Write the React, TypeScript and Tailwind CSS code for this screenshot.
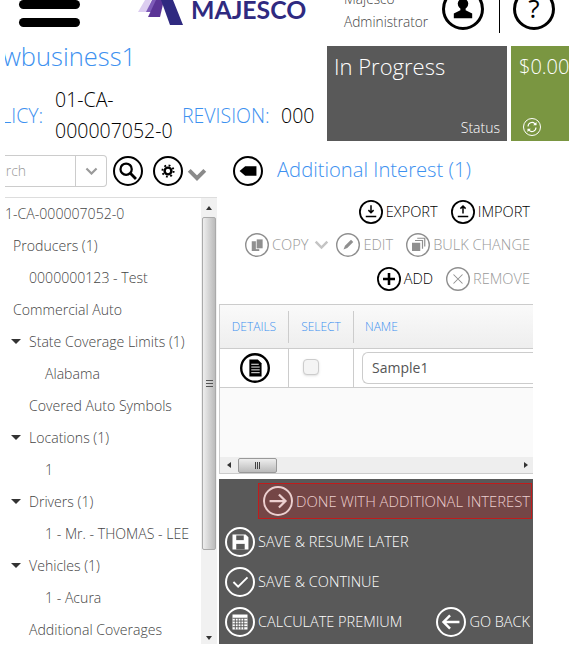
import React from "react";

type RingProps = { size?: number; sw?: number; color?: string; className?: string; children?: React.ReactNode };

// every round toolbar icon is a ring with a small glyph in a 32 box
const Ring = ({ size = 28, sw = 2, color = "currentColor", className = "", children }: RingProps) => {
  const stroke = sw * (32 / size);
  return (
    <svg width={size} height={size} viewBox="0 0 32 32" className={`shrink-0 ${className}`} style={{ color }}>
      <circle cx="16" cy="16" r={16 - stroke / 2} fill="none" stroke="currentColor" strokeWidth={stroke} />
      {children}
    </svg>
  );
};

const Chevron = ({ w = 18, color = "#8a8a8a", sw = 3 }: { w?: number; color?: string; sw?: number }) => (
  <svg width={w} height={w * 0.62} viewBox="0 0 18 11" className="shrink-0">
    <path d="M2 2l7 7 7-7" fill="none" stroke={color} strokeWidth={sw} />
  </svg>
);

const tree = [
  { label: "1-CA-000007052-0", indent: 0 },
  { label: "Producers (1)", indent: 8 },
  { label: "0000000123 - Test", indent: 24 },
  { label: "Commercial Auto", indent: 8 },
  { label: "State Coverage Limits (1)", indent: 24, open: true },
  { label: "Alabama", indent: 40 },
  { label: "Covered Auto Symbols", indent: 24 },
  { label: "Locations (1)", indent: 24, open: true },
  { label: "1", indent: 40 },
  { label: "Drivers (1)", indent: 24, open: true },
  { label: "1 - Mr. - THOMAS - LEE", indent: 40 },
  { label: "Vehicles (1)", indent: 24, open: true },
  { label: "1 - Acura", indent: 40 },
  { label: "Additional Coverages", indent: 24 },
];

const Header = () => (
  <div className="flex h-[46px] items-start overflow-hidden">
    <div className="ml-[19px] flex w-[61px] shrink-0 flex-col gap-[9px]">
      <div className="h-[9px] rounded-full bg-black" />
      <div className="h-[9px] rounded-full bg-black" />
    </div>
    <svg width="46" height="25" viewBox="0 0 46 25" className="ml-[58px] shrink-0">
      <polygon points="0,12 7,0 13,0 9,12" fill="#dccdf0" />
      <polygon points="8,12 14,0 22,0 15,12" fill="#7e5bb8" />
      <polygon points="10,17 18,0 26,0 22,17" fill="#5b3496" />
      <polygon points="23,0 35,0 45,25 32,25" fill="#2f2a80" />
    </svg>
    <div className="-mt-[6px] ml-[7px] w-[153px] shrink-0 font-['Lato',sans-serif] text-[24.8px] leading-[32px] font-bold text-[#2f2a80]">
      MAJESCO
    </div>
    <div className="-mt-[13px] w-[98px] shrink-0 text-[13.7px] leading-[23px] font-light text-[#444]">
      <div>Majesco</div>
      <div>Administrator</div>
    </div>
    <Ring size={42} sw={3} color="#000" className="-mt-[12px]">
      <circle cx="16" cy="12" r="4" />
      <path d="M14 15h4v2l5 2.5V23H9v-3.5l5-2.5z" />
    </Ring>
    <div className="ml-[15px] h-[33px] w-px shrink-0 bg-black" />
    <Ring size={42} sw={3} color="#000" className="-mt-[12px] ml-[13px]">
      <text x="16" y="23" textAnchor="middle" fontSize="20" fontFamily="'Open Sans',sans-serif" fill="#000">?</text>
    </Ring>
  </div>
);

const Summary = () => (
  <div className="flex h-[95px] items-start">
    <div className="ml-[5px] w-[322px] shrink-0 overflow-hidden font-light text-[#3d91f0]">
      <div className="-ml-[35px] mt-[-7px] text-[25.5px] leading-[34px] whitespace-nowrap">Newbusiness1</div>
      <div className="-ml-[30px] mt-[11px] flex items-center text-[19.5px] leading-[31px]">
        <span className="w-[80px] shrink-0">POLICY:</span>
        <span className="w-[127px] shrink-0 text-black">01-CA-<br />000007052-0</span>
        <span className="w-[99px] shrink-0">REVISION:</span>
        <span className="text-black">000</span>
      </div>
    </div>
    <div className="flex h-[95px] w-[180px] shrink-0 flex-col justify-between bg-[#595959] px-[7px] pb-[3px] text-white font-light">
      <div className="-mt-[1px] text-[22px] leading-[42px]">In Progress</div>
      <div className="text-right text-[14px] leading-5">Status</div>
    </div>
    <div className="ml-[4px] flex h-[95px] w-[58px] shrink-0 flex-col justify-between overflow-hidden bg-[#7a9641] pb-[4px] pl-[8px] text-white font-light">
      <div className="text-[20px] leading-[42px]">$0.00</div>
      <Ring size={18} sw={1} color="#fff" className="mb-[1px] ml-[4px]">
        <path d="M9 15a7 7 0 0 1 12-5l2 2M23 17a7 7 0 0 1-12 5l-2-2" fill="none" stroke="#fff" strokeWidth="2" />
        <path d="M24 7v6h-6M8 25v-6h6" fill="#fff" />
      </Ring>
    </div>
  </div>
);

const SearchRow = () => (
  <div className="mt-[14px] flex h-[32px] items-center">
    <div className="ml-[5px] flex h-[32px] w-[102px] shrink-0 items-center overflow-hidden rounded-r-[4px] border border-l-0 border-[#ccc]">
      <span className="-ml-[22px] mb-[2px] w-[92px] shrink-0 text-[14px] font-light text-[#999]">Search</span>
      <div className="h-[32px] w-px shrink-0 bg-[#ccc]" />
      <div className="ml-[9px]">
        <Chevron w={13} color="#9a9a9a" />
      </div>
    </div>
    <Ring size={30} color="#000" className="ml-[6px]">
      <circle cx="14" cy="14" r="6" fill="none" stroke="#000" strokeWidth="2.4" />
      <path d="M18.5 18.5l6 6" stroke="#000" strokeWidth="3" />
    </Ring>
    <Ring size={30} color="#000" className="ml-[10px]">
      <circle cx="16" cy="16" r="3.6" fill="none" stroke="#000" strokeWidth="2.6" />
      <circle cx="16" cy="16" r="6" fill="none" stroke="#000" strokeWidth="2" strokeDasharray="2 2.7" />
    </Ring>
    <div className="ml-[4px] mt-[7px]">
      <Chevron w={20} sw={3.6} />
    </div>
    <Ring size={30} color="#000" className="ml-[26px]">
      <path d="M7 16l6-5h12v10H13z" />
    </Ring>
    <div className="ml-[14px] mb-[3px] text-[20.2px] font-light text-[#3d91f0]">Additional Interest (1)</div>
  </div>
);

const Tree = () => (
  <div className="ml-[5px] flex h-[447px] w-[212px] shrink-0 border-t border-r border-[#ddd]">
    <div className="w-[196px] shrink-0 overflow-hidden">
      {tree.map((node) => (
        <div key={node.label} className="relative flex h-[32px] items-center text-[14.1px] whitespace-nowrap font-light text-[#444]" style={{ paddingLeft: node.indent }}>
          {node.open && <span className="absolute left-[6px] top-[13px] h-0 w-0 border-x-[5px] border-t-[5px] border-x-transparent border-t-[#333]" />}
          {node.label}
        </div>
      ))}
    </div>
    <div className="flex w-[16px] shrink-0 flex-col items-center bg-[#f1f1f1]">
      <div className="flex h-[19px] items-center">
        <span className="h-0 w-0 border-x-[3.5px] border-b-[4px] border-x-transparent border-b-[#333]" />
      </div>
      <div className="flex h-[333px] w-[14px] items-center justify-center rounded-[2px] border border-[#aaa] bg-gradient-to-r from-[#eee] to-[#bbb]">
        <div className="h-[7px] w-[7px] border-y border-[#555] bg-[linear-gradient(#555,#555)] bg-[length:100%_1px] bg-center bg-no-repeat" />
      </div>
      <div className="flex-1" />
      <div className="flex h-[9px] items-center pb-[3px]">
        <span className="h-0 w-0 border-x-[3.5px] border-t-[4px] border-x-transparent border-t-[#333]" />
      </div>
    </div>
  </div>
);

const ToolButton = ({ label, off, children }: { label: string; off?: boolean; children: React.ReactNode }) => (
  <div className={`flex items-center gap-[3px] text-[14.6px] ${off ? "text-[#999]" : "text-black"}`}>
    <Ring size={24} sw={off ? 1.4 : 1.8} color={off ? "#8f8f8f" : "#000"}>
      {children}
    </Ring>
    <span className="font-light">{label}</span>
  </div>
);

const Toolbar = () => (
  <div className="flex h-[106px] flex-col items-end pr-[3px]">
    <div className="flex h-[28px] items-center gap-[13px]">
      <ToolButton label="EXPORT">
        <path d="M16 7v10M12.5 13.5L16 17l3.5-3.5M9 22h14" fill="none" stroke="#000" strokeWidth="2" />
      </ToolButton>
      <ToolButton label="IMPORT">
        <path d="M16 18V8M12.5 11.5L16 8l3.5 3.5M9 22h14" fill="none" stroke="#000" strokeWidth="2" />
      </ToolButton>
    </div>
    <div className="mt-[2px] flex h-[34px] items-center">
      <ToolButton label="COPY" off>
        <rect x="9" y="11" width="10" height="13" fill="#8f8f8f" />
        <rect x="15" y="8" width="9" height="13" fill="#8f8f8f" stroke="#fff" />
      </ToolButton>
      <div className="ml-[6px] mr-[7px]">
        <Chevron w={15} color="#c4c4c4" sw={3} />
      </div>
      <ToolButton label="EDIT" off>
        <path d="M10 22l2-5 8-8 3 3-8 8z" fill="#8f8f8f" />
      </ToolButton>
      <div className="ml-[13px]">
        <ToolButton label="BULK CHANGE" off>
          <rect x="8" y="13" width="11" height="11" fill="#8f8f8f" />
          <path d="M12 10h10v11M15 7h10v11" fill="none" stroke="#8f8f8f" strokeWidth="1.6" />
        </ToolButton>
      </div>
    </div>
    <div className="flex h-[34px] items-center gap-[13px]">
      <ToolButton label="ADD">
        <path d="M16 8v16M8 16h16" stroke="#000" strokeWidth="3.4" />
      </ToolButton>
      <ToolButton label="REMOVE" off>
        <path d="M10 10l12 12M22 10L10 22" stroke="#8f8f8f" strokeWidth="1.4" />
      </ToolButton>
    </div>
  </div>
);

const GridTable = () => (
  <div className="flex h-[170px] flex-col border border-[#ccc] border-r-0 bg-[#fafafa]">
    <div className="flex h-[44px] shrink-0 items-center border-b border-[#ccc] bg-gradient-to-b from-[#fafafa] to-[#eee] text-[12px] font-light text-[#3d91f0]">
      <div className="flex h-[32px] w-[69px] items-center justify-center border-r border-[#ccc]">DETAILS</div>
      <div className="flex h-[32px] w-[65px] items-center justify-center border-r border-[#ccc]">SELECT</div>
      <div className="pl-[11px]">NAME</div>
    </div>
    <div className="flex h-[39px] shrink-0 border-b border-[#ccc] bg-white">
      <div className="flex w-[69px] items-center justify-center border-r border-[#ccc] pl-[2px]">
        <Ring size={30} sw={2.4} color="#000">
          <path d="M10 7h9l4 4v14H10z" fill="#000" />
          <path d="M12 12h8M12 15h9M12 18h9M12 21h9" stroke="#fff" />
        </Ring>
      </div>
      <div className="flex w-[65px] items-center border-r border-[#ccc] pl-[14px]">
        <span className="mb-[3px] h-[16px] w-[16px] rounded-[4px] border border-[#ccc] bg-[#f4f4f4] shadow-sm" />
      </div>
      <div className="min-w-0 flex-1 pl-[8px] pt-[3px]">
        <div className="flex h-[32px] items-center rounded-l-[6px] border border-r-0 border-[#ccc] pb-[2px] pl-[9px] text-[14px] font-normal text-[#555]">Sample1</div>
      </div>
    </div>
    <div className="flex-1" />
    <div className="flex h-[16px] shrink-0 items-center bg-[#eee] pl-[7px] pr-[5px]">
      <span className="h-0 w-0 border-y-[3.5px] border-r-[4px] border-y-transparent border-r-[#333]" />
      <div className="ml-[7px] flex h-[15px] w-[39px] items-center justify-center gap-[1px] rounded-[2px] border border-[#999] bg-gradient-to-b from-[#eee] to-[#bbb]">
        <span className="h-[7px] w-px bg-[#444]" />
        <span className="h-[7px] w-px bg-[#444]" />
        <span className="h-[7px] w-px bg-[#444]" />
      </div>
      <div className="flex-1" />
      <span className="h-0 w-0 border-y-[3.5px] border-l-[4px] border-y-transparent border-l-[#333]" />
    </div>
  </div>
);

const ActionRow = ({ label, children }: { label: string; children: React.ReactNode }) => (
  <div className="flex items-center text-[14.5px] font-light text-white">
    <Ring size={30} sw={2} color="#fff">
      {children}
    </Ring>
    <span className="ml-[3px]">{label}</span>
  </div>
);

const Actions = () => (
  <div className="mt-[5px] flex h-[165px] flex-col bg-[#595959] pl-[6px] pr-[1px] pt-[4px]">
    <div className="ml-[33px] flex h-[36px] items-center border border-[#c01c1c] bg-[#744646] pl-[4px] text-[14.8px] whitespace-nowrap font-light text-[#eccfcf]">
      <Ring size={30} sw={2} color="#eccfcf">
        <path d="M7 16h17M17 9l7 7-7 7" fill="none" stroke="#eccfcf" strokeWidth="2.4" />
      </Ring>
      <span className="ml-[3px]">DONE WITH ADDITIONAL INTEREST</span>
    </div>
    <div className="mt-[6px] flex h-[34px] items-center">
      <ActionRow label="SAVE & RESUME LATER">
        <path d="M8 8h14l3 3v13H8z" fill="#fff" />
        <rect x="12" y="9" width="8" height="5" fill="#595959" />
        <rect x="12" y="18" width="9" height="6" fill="#595959" />
      </ActionRow>
    </div>
    <div className="mt-[6px] flex h-[34px] items-center">
      <ActionRow label="SAVE & CONTINUE">
        <path d="M9 16l5 5 10-10" fill="none" stroke="#fff" strokeWidth="2" />
      </ActionRow>
    </div>
    <div className="mt-[6px] flex h-[34px] items-center justify-between pr-[2px]">
      <ActionRow label="CALCULATE PREMIUM">
        <rect x="8" y="8" width="16" height="16" fill="#fff" />
        <path d="M8 12h16M8 15h16M8 18h16M8 21h16M11 12v12M14 12v12M17 12v12M20 12v12" stroke="#595959" />
      </ActionRow>
      <ActionRow label="GO BACK">
        <path d="M25 16H8M15 9l-7 7 7 7" fill="none" stroke="#fff" strokeWidth="2.6" />
      </ActionRow>
    </div>
  </div>
);

const App = () => {
  return (
    <div className="h-[665px] w-[574px] overflow-hidden bg-white font-['Open_Sans',sans-serif]">
      <Header />
      <Summary />
      <SearchRow />
      <div className="mt-[10px] flex items-start">
        <Tree />
        <div className="ml-[2px] w-[314px] shrink-0 pt-[1px]">
          <Toolbar />
          <GridTable />
          <Actions />
        </div>
      </div>
    </div>
  );
};

export default App;
